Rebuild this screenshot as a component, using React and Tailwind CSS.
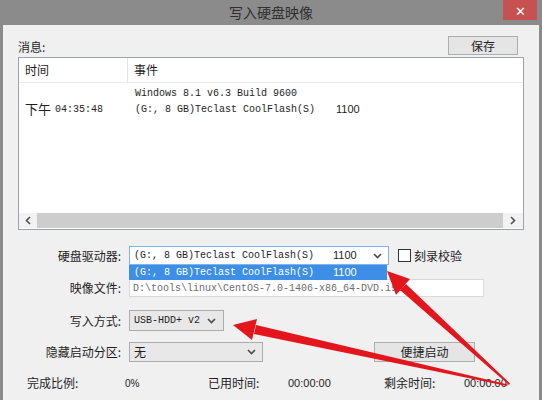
import React from 'react';

const cjk = "font-['Noto_Sans_CJK_SC','Liberation_Sans',sans-serif]";
const mono = "font-['Liberation_Mono','Noto_Sans_CJK_SC',monospace]";

const Chevron = () => (
  <svg width="9" height="6" viewBox="0 0 9 6" className="shrink-0">
    <path d="M1 1 L4.5 4.5 L8 1" fill="none" stroke="#4a4a4a" strokeWidth="1.6" />
  </svg>
);

const ScrollArrow = ({ dir }) => (
  <svg width="6" height="9" viewBox="0 0 6 9">
    <path d={dir === 'left' ? 'M5 1 L1.5 4.5 L5 8' : 'M1 1 L4.5 4.5 L1 8'} fill="none" stroke="#505050" strokeWidth="1.6" />
  </svg>
);

const Label = ({ children }) => (
  <div className="w-[104px] shrink-0 text-right pr-[1px] text-[12px] text-[#1e1e1e]">{children}</div>
);

const Arrows = () => (
  <svg width="542" height="400" viewBox="0 0 542 400" className="absolute left-0 top-0 pointer-events-none">
    {/* стрелка к списку дисков */}
    <polygon points="509,385 510,383.5 406,284 400,290" fill="#e3161d" />
    <polygon points="387,271 410,279 396,295" fill="#e3161d" />
    {/* стрелка к способу записи */}
    <polygon points="507,386 508,384.5 256,325 254,334" fill="#e3161d" />
    <polygon points="233,325 257,319 252,340" fill="#e3161d" />
  </svg>
);

export default function App() {
  return (
    <div className={`relative w-[542px] h-[400px] overflow-hidden bg-[#8b8b8b] ${cjk}`}>
      {/* Заголовок окна */}
      <div className="relative h-[25px] flex items-center justify-center">
        <span className="text-[14px] text-[#2e2e2e]">写入硬盘映像</span>
        <div className="absolute right-[5px] top-0 w-[34px] h-[20px] bg-[#c75050] flex items-center justify-center text-white text-[13px] leading-none">
          ✕
        </div>
      </div>

      <div className="mx-[3px] h-[375px] bg-[#f0f0f0] px-[15px] pt-[11px]">
        {/* Сообщения */}
        <div className="flex items-end justify-between">
          <span className="text-[12px] text-[#1e1e1e] leading-none pb-[2px]">消息:</span>
          <button className="mr-[6px] w-[70px] h-[19px] border border-[#adadad] bg-[#e5e5e5] text-[12px] text-[#1e1e1e] leading-none">
            保存
          </button>
        </div>

        <div className="mt-[2px] h-[173px] border border-[#9ea3ab] bg-white flex flex-col">
          <div className="h-[25px] flex items-center border-b border-[#ececec] text-[12px] text-[#1e1e1e] shrink-0">
            <div className="w-[109px] h-full flex items-center pl-[6px] border-r border-[#e3e3e3]">时间</div>
            <div className="pl-[6px]">事件</div>
          </div>
          <div className="flex-1 flex pt-[2px]">
            <div className="w-[110px] pl-[6px]">
              <div className="h-[16px]" />
              <div className="h-[16px] flex items-center text-[#1e1e1e]">
                <span className="text-[13px]">下午</span>
                <span className={`${mono} text-[10px] ml-[4px]`}>04:35:48</span>
              </div>
            </div>
            <div className="pl-[6px] text-[#1e1e1e]">
              <div className={`h-[16px] flex items-center ${mono} text-[10px]`}>Windows 8.1 v6.3 Build 9600</div>
              <div className="h-[16px] flex items-center">
                <span className={`${mono} text-[10px] w-[201px]`}>(G:, 8 GB)Teclast CoolFlash(S)</span>
                <span className="text-[11px] font-['Liberation_Sans',sans-serif]">1100</span>
              </div>
            </div>
          </div>
          <div className="h-[15px] mb-[1px] flex shrink-0">
            <div className="w-[18px] flex items-center justify-center bg-[#f2f2f2]">
              <ScrollArrow dir="left" />
            </div>
            <div className="flex-1 bg-[#cdcdcd]" />
            <div className="w-[20px] flex items-center justify-center bg-[#f2f2f2]">
              <ScrollArrow dir="right" />
            </div>
          </div>
        </div>

        {/* Параметры */}
        <div className="mt-[16px] flex items-center gap-[7px] h-[19px]">
          <Label>硬盘驱动器:</Label>
          <div className="relative">
            <div className="w-[260px] h-[19px] border border-[#7eb4ea] bg-white flex items-center pl-[4px] pr-[6px] text-[#1e1e1e]">
              <span className={`${mono} text-[10px] w-[199px]`}>(G:, 8 GB)Teclast CoolFlash(S)</span>
              <span className="text-[11px] font-['Liberation_Sans',sans-serif] flex-1">1100</span>
              <Chevron />
            </div>
            <div className="absolute left-0 top-[19px] w-[258px] h-[15px] bg-[#3d8ee6] border border-[#3d8ee6] flex items-center pl-[4px] text-white z-10">
              <span className={`${mono} text-[10px] w-[199px]`}>(G:, 8 GB)Teclast CoolFlash(S)</span>
              <span className="text-[11px] font-['Liberation_Sans',sans-serif]">1100</span>
            </div>
          </div>
          <div className="ml-[2px] flex items-center gap-[3px]">
            <div className="w-[13px] h-[13px] border border-[#333] bg-white" />
            <span className="text-[12px] text-[#1e1e1e]">刻录校验</span>
          </div>
        </div>

        <div className="mt-[14px] flex items-center gap-[7px] h-[18px]">
          <Label>映像文件:</Label>
          <div className={`w-[355px] h-[18px] border border-[#d9d9d9] bg-white flex items-center pl-[3px] ${mono} text-[10px] text-[#6d6d6d] overflow-hidden whitespace-nowrap`}>
            D:\tools\linux\CentOS-7.0-1406-x86_64-DVD.iso
          </div>
        </div>

        <div className="mt-[13px] flex items-center gap-[7px] h-[21px]">
          <Label>写入方式:</Label>
          <div className="w-[95px] h-[21px] border border-[#acacac] bg-[#e8e8e8] flex items-center justify-between pl-[4px] pr-[7px]">
            <span className={`${mono} text-[10px] text-[#1e1e1e]`}>USB-HDD+ v2</span>
            <Chevron />
          </div>
        </div>

        <div className="mt-[11px] flex items-center h-[20px]">
          <div className="flex items-center gap-[7px]">
            <Label>隐藏启动分区:</Label>
            <div className="w-[134px] h-[20px] border border-[#acacac] bg-[#e8e8e8] flex items-center justify-between pl-[4px] pr-[6px]">
              <span className="text-[12px] text-[#1e1e1e]">无</span>
              <Chevron />
            </div>
          </div>
          <button className="ml-[111px] w-[101px] h-[20px] border border-[#adadad] bg-[#e5e5e5] text-[12px] text-[#1e1e1e] leading-none">
            便捷启动
          </button>
        </div>

        <div className="mt-[12px] ml-[9px] flex items-center text-[12px] text-[#1e1e1e] h-[18px]">
          <span className="w-[98px]">完成比例:</span>
          <span className="w-[83px] text-[10px] font-['Liberation_Sans',sans-serif]">0%</span>
          <span className="w-[80px]">已用时间:</span>
          <span className="w-[96px] text-[11px] font-['Liberation_Sans',sans-serif]">00:00:00</span>
          <span className="w-[80px]">剩余时间:</span>
          <span className="text-[11px] font-['Liberation_Sans',sans-serif]">00:00:00</span>
        </div>
      </div>

      <Arrows />
    </div>
  );
}
